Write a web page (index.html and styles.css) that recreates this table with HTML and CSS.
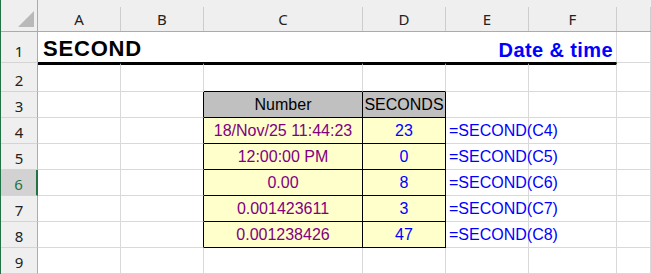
FILE: index.html
```html
<!DOCTYPE html>
<html lang="en">

<head>
  <meta charset="UTF-8" />
  <title>SECOND</title>
  <link rel="stylesheet" href="styles.css">
</head>

<body>
  <div class="sheet">
    <div class="corner">
      <svg width="37" height="31" viewBox="0 0 37 31"><polygon points="17,27 33,27 33,11" fill="#b9b9b9" /></svg>
    </div>
    <div class="col-head"><span class="col-label">A</span></div>
    <div class="col-head"><span class="col-label">B</span></div>
    <div class="col-head"><span class="col-label">C</span></div>
    <div class="col-head"><span class="col-label">D</span></div>
    <div class="col-head"><span class="col-label">E</span></div>
    <div class="col-head"><span class="col-label">F</span></div>
    <div class="col-head"><span class="col-label"></span></div>

    <!-- row 1 -->
    <div class="row-head">1</div>
    <div class="title-cell">
      <span class="title">SECOND</span>
      <span class="category">Date &amp; time</span>
    </div>
    <div class="cell"></div>

    <!-- row 2 -->
    <div class="row-head">2</div>
    <div class="cell under-title"></div>
    <div class="cell under-title"></div>
    <div class="cell under-title table-top"></div>
    <div class="cell under-title table-top"></div>
    <div class="cell under-title"></div>
    <div class="cell under-title"></div>
    <div class="cell"></div>

    <!-- row 3 -->
    <div class="row-head">3</div>
    <div class="cell"></div>
    <div class="cell table-left"></div>
    <div class="cell table-cell head-cell">Number</div>
    <div class="cell table-cell head-cell">SECONDS</div>
    <div class="cell"></div>
    <div class="cell"></div>
    <div class="cell"></div>

    <!-- row 4 -->
    <div class="row-head">4</div>
    <div class="cell"></div>
    <div class="cell table-left"></div>
    <div class="cell table-cell value">18/Nov/25 11:44:23</div>
    <div class="cell table-cell result">23</div>
    <div class="cell formula">=SECOND(C4)</div>
    <div class="cell"></div>
    <div class="cell"></div>

    <!-- row 5 -->
    <div class="row-head">5</div>
    <div class="cell"></div>
    <div class="cell table-left"></div>
    <div class="cell table-cell value">12:00:00 PM</div>
    <div class="cell table-cell result">0</div>
    <div class="cell formula">=SECOND(C5)</div>
    <div class="cell"></div>
    <div class="cell"></div>

    <!-- row 6 -->
    <div class="row-head selected">6</div>
    <div class="cell"></div>
    <div class="cell table-left"></div>
    <div class="cell table-cell value">0.00</div>
    <div class="cell table-cell result">8</div>
    <div class="cell formula">=SECOND(C6)</div>
    <div class="cell"></div>
    <div class="cell"></div>

    <!-- row 7 -->
    <div class="row-head">7</div>
    <div class="cell"></div>
    <div class="cell table-left"></div>
    <div class="cell table-cell value">0.001423611</div>
    <div class="cell table-cell result">3</div>
    <div class="cell formula">=SECOND(C7)</div>
    <div class="cell"></div>
    <div class="cell"></div>

    <!-- row 8 -->
    <div class="row-head">8</div>
    <div class="cell"></div>
    <div class="cell table-left"></div>
    <div class="cell table-cell value">0.001238426</div>
    <div class="cell table-cell result">47</div>
    <div class="cell formula">=SECOND(C8)</div>
    <div class="cell"></div>
    <div class="cell"></div>

    <!-- row 9 -->
    <div class="row-head">9</div>
    <div class="cell"></div>
    <div class="cell"></div>
    <div class="cell"></div>
    <div class="cell"></div>
    <div class="cell"></div>
    <div class="cell"></div>
    <div class="cell"></div>
  </div>
</body>

</html>
```

FILE: styles.css
```css
body {
  margin: 0;
  background-color: #ffffff;
  font-family: 'Liberation Sans', Arial, sans-serif;
  overflow: hidden;
}

.sheet {
  display: grid;
  grid-template-columns: 37px 83px 83px 159px 83px 83px 88px 1fr;
  grid-template-rows: 32px 31px 29px repeat(7, 26px);
  width: 650px;
  height: 274px;
  border-left: 1px solid #217346;
}

.corner {
  background: #efefef;
  border-right: 1px solid #ababab;
  border-bottom: 1px solid #ababab;
  box-sizing: border-box;
}

.corner svg {
  display: block;
}

.col-head {
  background: #efefef;
  border-bottom: 1px solid #ababab;
  box-sizing: border-box;
  padding-top: 7px;
  display: flex;
}

.col-label {
  flex: 1;
  border-right: 1px solid #cdcdcd;
  font-family: 'Noto Sans', 'Open Sans', sans-serif;
  font-size: 15px;
  line-height: 24px;
  text-align: center;
  color: #222222;
}

.row-head {
  background: #efefef;
  border-right: 1px solid #ababab;
  border-bottom: 1px solid #d4d4d4;
  box-sizing: border-box;
  display: flex;
  align-items: flex-end;
  justify-content: center;
  font-family: 'Noto Sans', 'Open Sans', sans-serif;
  font-size: 15px;
  line-height: 22px;
  color: #222222;
}

.row-head.selected {
  background: #d2d2d2;
  border-right: 2px solid #217346;
  color: #217346;
}

.cell {
  border-right: 1px solid #d9d9d9;
  border-bottom: 1px solid #d9d9d9;
  box-sizing: border-box;
  font-size: 16px;
  line-height: 25px;
  white-space: nowrap;
}

.title-cell {
  grid-column: span 6;
  display: flex;
  justify-content: space-between;
  align-items: flex-end;
  padding: 0 3px 0 5px;
  border-right: 1px solid #d9d9d9;
  border-bottom: 1px solid #000000;
  box-sizing: border-box;
  font-weight: bold;
}

.title {
  font-size: 22px;
  letter-spacing: 0.8px;
  line-height: 26px;
  color: #000000;
}

.category {
  font-size: 20px;
  letter-spacing: 0.4px;
  line-height: 24px;
  color: #0000ff;
}

.under-title {
  border-top: 2px solid #000000;
}

.table-top {
  border-bottom-color: #000000;
}

.table-left {
  border-right-color: #000000;
}

.table-cell {
  border-right-color: #000000;
  border-bottom-color: #000000;
  text-align: center;
  background: #ffffcc;
}

.head-cell {
  background: #c0c0c0;
  color: #000000;
}

.value {
  color: #800080;
}

.result {
  color: #0000ff;
}

.formula {
  color: #0000ff;
  padding-left: 3px;
}
```
